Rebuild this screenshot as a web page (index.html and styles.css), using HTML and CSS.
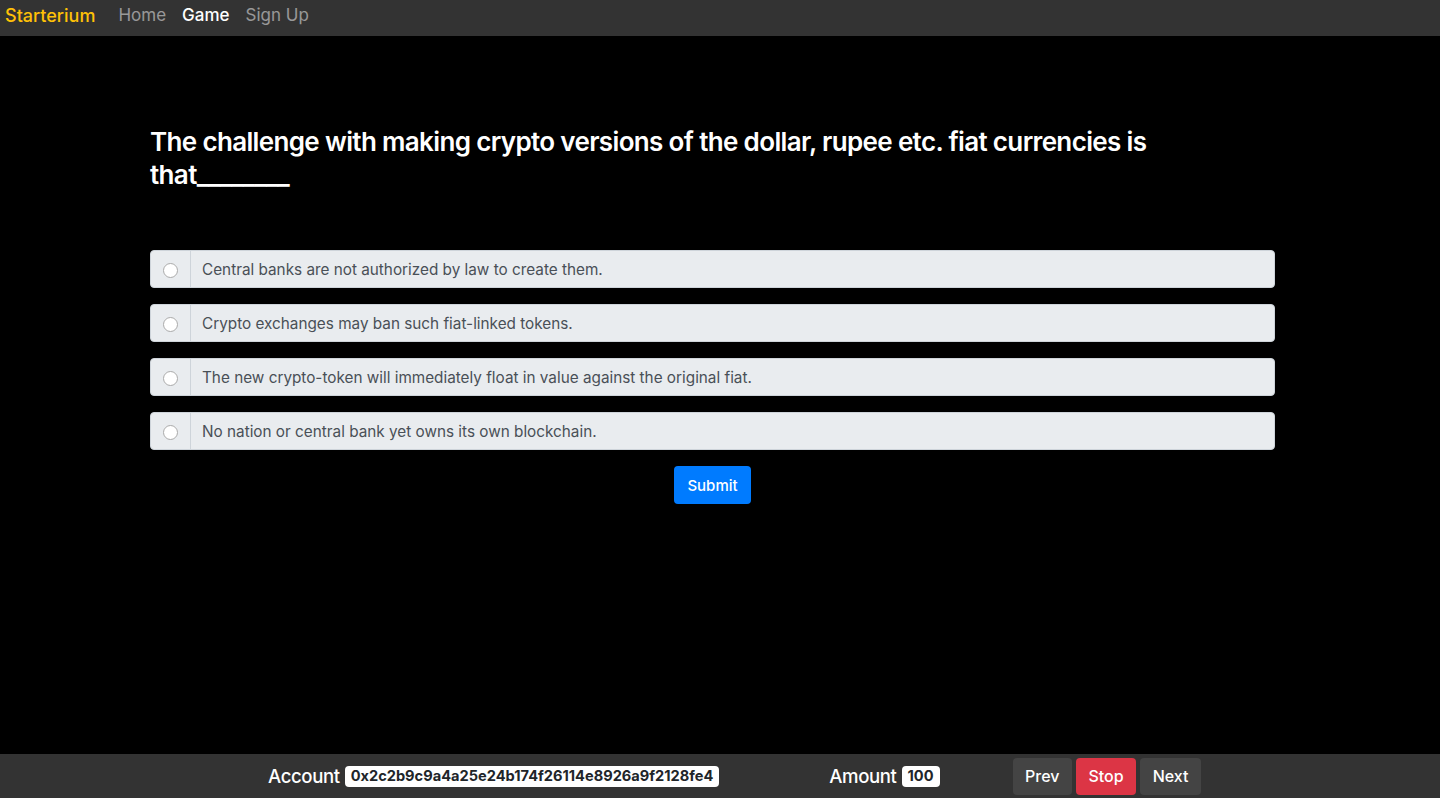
FILE: index.html
```html
<!DOCTYPE html>
<html>
<head>
<meta charset="utf-8">
<link rel="stylesheet" href="styles.css">
</head>
<body>
<nav class="navbar">
  <a class="brand">Starterium</a>
  <a class="nav-link">Home</a>
  <a class="nav-link active">Game</a>
  <a class="nav-link">Sign Up</a>
</nav>
<main class="content">
  <h3 class="question">The challenge with making crypto versions of the dollar, rupee etc. fiat currencies is that________</h3>
  <div class="options">
    <label class="option"><span class="radio-box"><span class="radio"></span></span><span class="option-text">Central banks are not authorized by law to create them.</span></label>
    <label class="option"><span class="radio-box"><span class="radio"></span></span><span class="option-text">Crypto exchanges may ban such fiat-linked tokens.</span></label>
    <label class="option"><span class="radio-box"><span class="radio"></span></span><span class="option-text">The new crypto-token will immediately float in value against the original fiat.</span></label>
    <label class="option"><span class="radio-box"><span class="radio"></span></span><span class="option-text">No nation or central bank yet owns its own blockchain.</span></label>
  </div>
  <div class="submit-row"><button class="btn btn-primary">Submit</button></div>
</main>
<footer class="footer">
  <div class="footer-item account">Account <span class="badge">0x2c2b9c9a4a25e24b174f26114e8926a9f2128fe4</span></div>
  <div class="footer-item amount">Amount <span class="badge">100</span></div>
  <div class="footer-buttons">
    <button class="btn btn-dark">Prev</button>
    <button class="btn btn-danger">Stop</button>
    <button class="btn btn-dark">Next</button>
  </div>
</footer>
</body>
</html>
```
FILE: styles.css
```css
* { box-sizing: border-box; }
html, body { margin: 0; height: 100%; }
body {
  background: #000;
  font-family: Inter, "Liberation Sans", sans-serif;
  color: #fff;
  display: flex;
  flex-direction: column;
  height: 798px;
  overflow: hidden;
}
.navbar {
  height: 36px;
  background: #333;
  display: flex;
  align-items: center;
  padding: 0 5px 6px;
  flex-shrink: 0;
}
.brand {
  color: #ffc107;
  font-size: 18px;
  font-weight: 500;
  margin-right: 23px;
}
.nav-link {
  color: rgba(255,255,255,.5);
  font-size: 17px;
  margin-right: 16px;
}
.nav-link.active { color: #fff; font-weight: 500; }
.content {
  flex: 1;
  width: 1125px;
  margin-left: 150px;
  padding-top: 89px;
}
.question {
  margin: 0 0 59px;
  font-size: 26px;
  line-height: 33px;
  font-weight: 600;
  letter-spacing: -0.65px;
  max-width: 1010px;
}
.options { display: flex; flex-direction: column; gap: 16px; }
.option {
  display: flex;
  height: 38px;
  background: #e9ecef;
  border: 1px solid #ced4da;
  border-radius: 4px;
  color: #495057;
  font-size: 15.3px;
}
.radio-box {
  width: 40px;
  display: flex;
  align-items: center;
  justify-content: center;
  border-right: 1px solid #ced4da;
}
.radio {
  width: 15px; height: 15px;
  border-radius: 50%;
  background: #fff;
  border: 1px solid #aaa;
  margin-top: 2px;
}
.option-text { display: flex; align-items: center; padding-left: 11px; }
.submit-row { display: flex; justify-content: center; margin-top: 16px; }
.btn {
  border: 0;
  border-radius: 4px;
  color: #fff;
  font-family: inherit;
  font-size: 15px;
  font-weight: 500;
  height: 38px;
  padding: 0 13px;
}
.btn-primary { background: #007bff; }
.btn-dark { background: #444; }
.btn-danger { background: #dc3545; }
.footer {
  height: 44px;
  background: #333;
  display: flex;
  align-items: center;
  flex-shrink: 0;
}
.footer-item { font-size: 18.6px; font-weight: 500; letter-spacing: -0.4px; display: flex; align-items: center; }
.account { margin-left: 268px; }
.amount { margin-left: 110px; }
.badge {
  background: #fff;
  color: #212529;
  font-size: 14.6px;
  line-height: 15px;
  font-weight: 700;
  letter-spacing: 0;
  border-radius: 4px;
  padding: 3px 6px;
  margin-left: 5px;
}
.footer-buttons { display: flex; gap: 4px; margin-left: 73px; }
.footer-buttons .btn { height: 37px; font-size: 16px; padding: 0 12.5px; }
```
